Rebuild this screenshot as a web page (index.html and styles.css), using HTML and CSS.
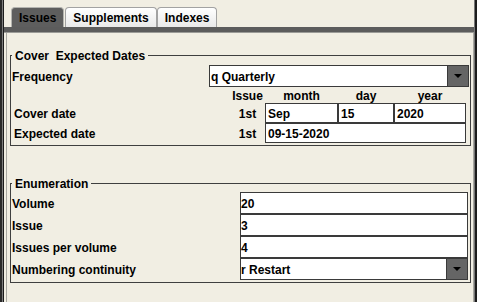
FILE: index.html
```html
<!DOCTYPE html>
<html>
<head>
<meta charset="utf-8">
<title>Issues</title>
<link rel="stylesheet" href="styles.css">
</head>
<body>
<div class="window">
  <div class="edge-left"></div>
  <div class="main">
    <div class="tabbar">
      <div class="tab active">Issues</div>
      <div class="tab">Supplements</div>
      <div class="tab">Indexes</div>
    </div>
    <div class="band"></div>
    <div class="panel">
      <fieldset class="group dates">
        <legend>Cover&nbsp; Expected Dates</legend>
        <div class="freq-row">
          <span class="label">Frequency</span>
          <div class="select freq">
            <span class="value">q Quarterly</span>
            <span class="drop"><svg width="8" height="4" viewBox="0 0 8 4"><polygon points="0,0 8,0 4,4" fill="#000"/></svg></span>
          </div>
        </div>
        <div class="date-grid">
          <span></span>
          <span class="head">Issue</span>
          <span class="head">month</span>
          <span class="head">day</span>
          <span class="head">year</span>

          <span class="label indent">Cover date</span>
          <span class="num">1st</span>
          <div class="box">Sep</div>
          <div class="box">15</div>
          <div class="box">2020</div>

          <span class="label indent">Expected date</span>
          <span class="num">1st</span>
          <div class="box wide">09-15-2020</div>
        </div>
      </fieldset>

      <fieldset class="group enum">
        <legend>Enumeration</legend>
        <div class="enum-grid">
          <span class="label">Volume</span>
          <div class="field">20</div>
          <span class="label">Issue</span>
          <div class="field">3</div>
          <span class="label">Issues per volume</span>
          <div class="field">4</div>
          <span class="label">Numbering continuity</span>
          <div class="select enum-select">
            <span class="value">r Restart</span>
            <span class="drop"><svg width="8" height="4" viewBox="0 0 8 4"><polygon points="0,0 8,0 4,4" fill="#000"/></svg></span>
          </div>
        </div>
      </fieldset>
    </div>
  </div>
  <div class="edge-right"></div>
</div>
</body>
</html>
```

FILE: styles.css
```css
html, body {
  margin: 0;
  padding: 0;
}

body {
  background: #f1eee3;
  font: bold 12px "Liberation Sans", Arial, sans-serif;
  color: #000;
}

.window {
  display: flex;
  width: 477px;
  height: 302px;
  overflow: hidden;
}

.edge-left {
  flex: none;
  width: 4px;
  background: linear-gradient(to right, #2a2a2a 0 2px, #7d7d7d 2px 3px, #1c1c1c 3px 4px);
}

.edge-right {
  flex: none;
  width: 3px;
  background: linear-gradient(to right, #767676 0 1px, #1c1c1c 1px 3px);
}

.main {
  flex: 1;
  min-width: 0;
  display: flex;
  flex-direction: column;
}

/* Tabs */
.tabbar {
  height: 27px;
  box-sizing: border-box;
  display: flex;
  align-items: flex-end;
  gap: 0;
  padding-left: 7px;
}

.tab {
  height: 20px;
  box-sizing: border-box;
  padding: 2px 7px 0;
  line-height: 17px;
  border: 1px solid #a2a2a2;
  border-bottom: none;
  border-radius: 4px 4px 0 0;
  background: linear-gradient(#ffffff, #e9e9e9);
  white-space: nowrap;
}

.tab.active {
  background: #5e5e5e;
  border-color: #b4b4b0;
  margin-right: 1px;
}

.band {
  height: 5px;
  background: #5c5c5c;
  border-bottom: 1px solid #9b9b97;
}

/* Panel */
.panel {
  flex: 1;
  margin-left: 2px;
  border-left: 1px solid #a9a8a2;
  border-right: 1px solid #a9a8a2;
  padding: 0 2px 0 3px;
}

fieldset.group {
  margin: 15px 0 0;
  padding: 2px 1px 2px 1px;
  border: 1px solid #3f3f3f;
  min-width: 0;
}

fieldset.enum {
  margin-top: 30px;
  padding-top: 1px;
}

legend {
  padding: 2px 3px 0;
  line-height: 13px;
}

.label {
  white-space: nowrap;
}

/* Frequency */
.freq-row {
  display: flex;
  align-items: stretch;
  justify-content: space-between;
  height: 22px;
}

.freq-row .label {
  padding-top: 3px;
  line-height: 19px;
}

.select {
  display: flex;
  box-sizing: border-box;
  height: 22px;
  border: 1px solid #3a3a3a;
  background: #fff;
}

.select.freq {
  width: 260px;
}

.select .value {
  flex: 1;
  padding: 3px 0 0 1px;
  line-height: 17px;
}

.drop {
  flex: none;
  width: 20px;
  background: #656565;
  border-left: 1px solid #3a3a3a;
  display: flex;
  align-items: center;
  justify-content: center;
}

.drop svg {
  display: block;
}

/* Dates grid */
.date-grid {
  display: grid;
  grid-template-columns: 1fr 35px 73px 56px 72px;
  grid-template-rows: 16px 20px 20px;
  padding-right: 3px;
}

.head {
  text-align: center;
  line-height: 14px;
  padding-top: 2px;
}

.num {
  text-align: center;
  padding-top: 2px;
  line-height: 18px;
}

.label.indent {
  padding-left: 2px;
  padding-top: 2px;
  line-height: 18px;
}

.box {
  box-sizing: border-box;
  border: 1px solid #3a3a3a;
  background: #fff;
  padding: 2px 2px 0;
  line-height: 16px;
}

.box.wide {
  grid-column: span 3;
}

/* Enumeration */
.enum-grid {
  display: grid;
  grid-template-columns: 1fr 228px;
  grid-auto-rows: 22px;
  padding-right: 1px;
}

.enum-grid .label {
  padding-top: 3px;
  line-height: 19px;
}

.field {
  box-sizing: border-box;
  border: 1px solid #3a3a3a;
  background: #fff;
  padding: 3px 0 0;
  line-height: 17px;
}

.select.enum-select .value {
  padding-left: 0;
}
```
